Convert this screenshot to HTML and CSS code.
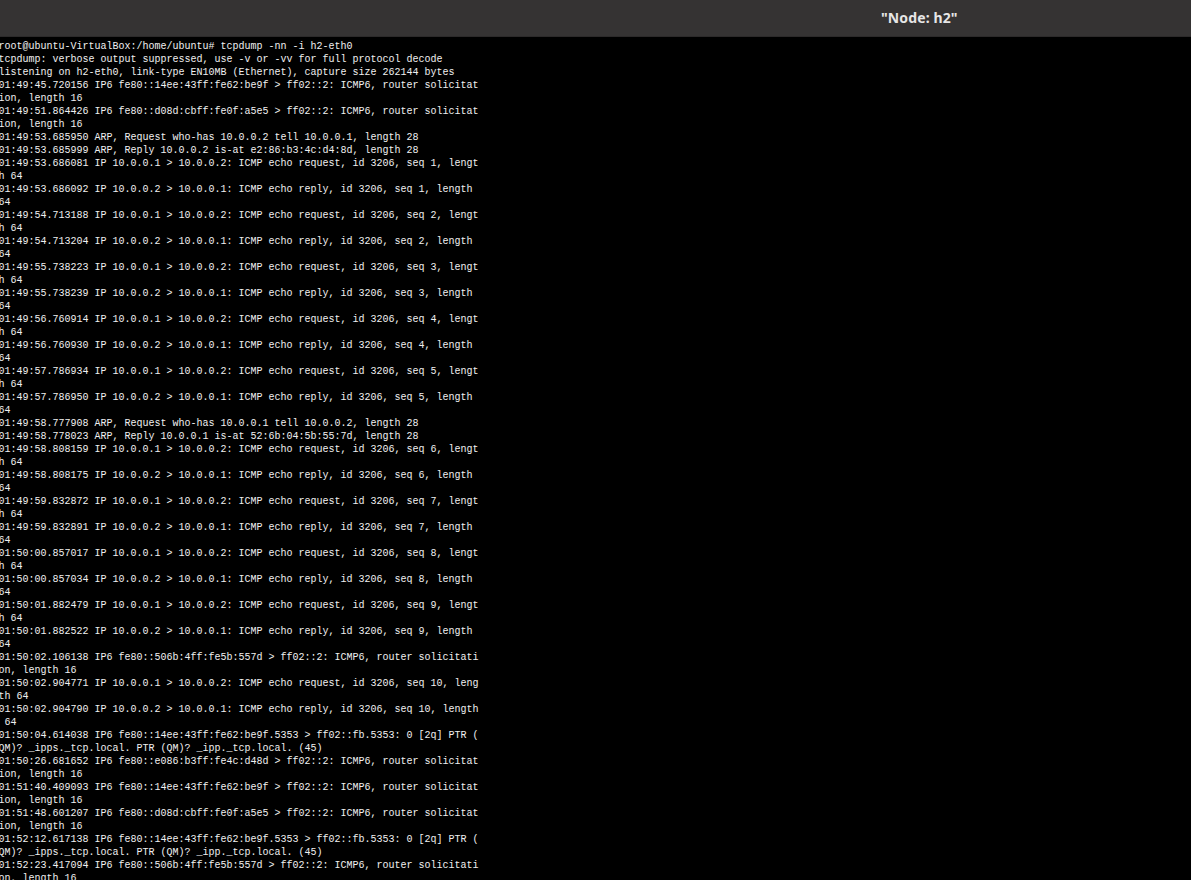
FILE: index.html
```html
<!DOCTYPE html>
<html lang="en">
<head>
<meta charset="utf-8">
<title>"Node: h2"</title>
<link rel="stylesheet" href="styles.css">
</head>
<body>
<div class="window">
<header class="titlebar"><span class="title">"Node: h2"</span></header>
<main class="terminal"><pre class="output">root@ubuntu-VirtualBox:/home/ubuntu# tcpdump -nn -i h2-eth0
tcpdump: verbose output suppressed, use -v or -vv for full protocol decode
listening on h2-eth0, link-type EN10MB (Ethernet), capture size 262144 bytes
01:49:45.720156 IP6 fe80::14ee:43ff:fe62:be9f &gt; ff02::2: ICMP6, router solicitat
ion, length 16
01:49:51.864426 IP6 fe80::d08d:cbff:fe0f:a5e5 &gt; ff02::2: ICMP6, router solicitat
ion, length 16
01:49:53.685950 ARP, Request who-has 10.0.0.2 tell 10.0.0.1, length 28
01:49:53.685999 ARP, Reply 10.0.0.2 is-at e2:86:b3:4c:d4:8d, length 28
01:49:53.686081 IP 10.0.0.1 &gt; 10.0.0.2: ICMP echo request, id 3206, seq 1, lengt
h 64
01:49:53.686092 IP 10.0.0.2 &gt; 10.0.0.1: ICMP echo reply, id 3206, seq 1, length
64
01:49:54.713188 IP 10.0.0.1 &gt; 10.0.0.2: ICMP echo request, id 3206, seq 2, lengt
h 64
01:49:54.713204 IP 10.0.0.2 &gt; 10.0.0.1: ICMP echo reply, id 3206, seq 2, length
64
01:49:55.738223 IP 10.0.0.1 &gt; 10.0.0.2: ICMP echo request, id 3206, seq 3, lengt
h 64
01:49:55.738239 IP 10.0.0.2 &gt; 10.0.0.1: ICMP echo reply, id 3206, seq 3, length
64
01:49:56.760914 IP 10.0.0.1 &gt; 10.0.0.2: ICMP echo request, id 3206, seq 4, lengt
h 64
01:49:56.760930 IP 10.0.0.2 &gt; 10.0.0.1: ICMP echo reply, id 3206, seq 4, length
64
01:49:57.786934 IP 10.0.0.1 &gt; 10.0.0.2: ICMP echo request, id 3206, seq 5, lengt
h 64
01:49:57.786950 IP 10.0.0.2 &gt; 10.0.0.1: ICMP echo reply, id 3206, seq 5, length
64
01:49:58.777908 ARP, Request who-has 10.0.0.1 tell 10.0.0.2, length 28
01:49:58.778023 ARP, Reply 10.0.0.1 is-at 52:6b:04:5b:55:7d, length 28
01:49:58.808159 IP 10.0.0.1 &gt; 10.0.0.2: ICMP echo request, id 3206, seq 6, lengt
h 64
01:49:58.808175 IP 10.0.0.2 &gt; 10.0.0.1: ICMP echo reply, id 3206, seq 6, length
64
01:49:59.832872 IP 10.0.0.1 &gt; 10.0.0.2: ICMP echo request, id 3206, seq 7, lengt
h 64
01:49:59.832891 IP 10.0.0.2 &gt; 10.0.0.1: ICMP echo reply, id 3206, seq 7, length
64
01:50:00.857017 IP 10.0.0.1 &gt; 10.0.0.2: ICMP echo request, id 3206, seq 8, lengt
h 64
01:50:00.857034 IP 10.0.0.2 &gt; 10.0.0.1: ICMP echo reply, id 3206, seq 8, length
64
01:50:01.882479 IP 10.0.0.1 &gt; 10.0.0.2: ICMP echo request, id 3206, seq 9, lengt
h 64
01:50:01.882522 IP 10.0.0.2 &gt; 10.0.0.1: ICMP echo reply, id 3206, seq 9, length
64
01:50:02.106138 IP6 fe80::506b:4ff:fe5b:557d &gt; ff02::2: ICMP6, router solicitati
on, length 16
01:50:02.904771 IP 10.0.0.1 &gt; 10.0.0.2: ICMP echo request, id 3206, seq 10, leng
th 64
01:50:02.904790 IP 10.0.0.2 &gt; 10.0.0.1: ICMP echo reply, id 3206, seq 10, length
 64
01:50:04.614038 IP6 fe80::14ee:43ff:fe62:be9f.5353 &gt; ff02::fb.5353: 0 [2q] PTR (
QM)? _ipps._tcp.local. PTR (QM)? _ipp._tcp.local. (45)
01:50:26.681652 IP6 fe80::e086:b3ff:fe4c:d48d &gt; ff02::2: ICMP6, router solicitat
ion, length 16
01:51:40.409093 IP6 fe80::14ee:43ff:fe62:be9f &gt; ff02::2: ICMP6, router solicitat
ion, length 16
01:51:48.601207 IP6 fe80::d08d:cbff:fe0f:a5e5 &gt; ff02::2: ICMP6, router solicitat
ion, length 16
01:52:12.617138 IP6 fe80::14ee:43ff:fe62:be9f.5353 &gt; ff02::fb.5353: 0 [2q] PTR (
QM)? _ipps._tcp.local. PTR (QM)? _ipp._tcp.local. (45)
01:52:23.417094 IP6 fe80::506b:4ff:fe5b:557d &gt; ff02::2: ICMP6, router solicitati
on, length 16</pre></main>
</div>
</body>
</html>
```
FILE: styles.css
```css
html, body {
  margin: 0;
  height: 100%;
  background: #000;
}
.window {
  display: flex;
  flex-direction: column;
  height: 880px;
  overflow: hidden;
}
.titlebar {
  flex: none;
  height: 37px;
  box-sizing: border-box;
  background: #353333;
  border-bottom: 1px solid #2c2a2a;
  display: flex;
  align-items: center;
  padding-left: 881px;
}
.title {
  font: 700 14px/18px "Noto Sans", "Open Sans", sans-serif;
  letter-spacing: 0.12px;
  color: #e6e6e6;
}
.terminal {
  flex: 1;
  background: #000;
  padding: 3px 0 0;
  overflow: hidden;
}
.output {
  margin: 0 0 0 -1.5px;
  font: 10px/13px "Liberation Mono", monospace;
  color: #f0f0f0;
  white-space: pre;
}
```
